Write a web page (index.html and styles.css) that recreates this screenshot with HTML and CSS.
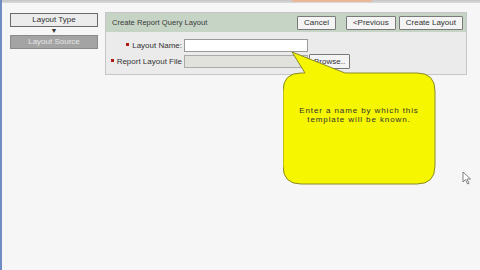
FILE: index.html
```html
<!DOCTYPE html>
<html lang="en">
<head>
  <meta charset="UTF-8">
  <title>Create Report Query Layout</title>
  <link rel="stylesheet" href="styles.css">
</head>
<body>
  <div class="topo"><span class="topo-link"></span></div>

  <div class="pagina">
    <!-- passos -->
    <div class="passos">
      <div class="passo">Layout Type</div>
      <div class="seta">&#9660;</div>
      <div class="passo atual">Layout Source</div>
    </div>

    <!-- painel -->
    <div class="painel">
      <div class="cabecalho">
        <span class="titulo">Create Report Query Layout</span>
        <div class="acoes">
          <button class="btn">Cancel</button>
          <button class="btn btn-prev">&lt;Previous</button>
          <button class="btn">Create Layout</button>
        </div>
      </div>
      <div class="corpo">
        <div class="linha">
          <label class="rotulo"><span class="req"></span>Layout Name:</label>
          <input class="campo" type="text">
        </div>
        <div class="linha">
          <label class="rotulo"><span class="req"></span>Report Layout File</label>
          <input class="campo campo-arq" type="text" disabled>
          <button class="btn btn-arq">Browse..</button>
        </div>
      </div>
    </div>
  </div>

  <!-- balao de ajuda -->
  <div class="balao">
    <svg width="160" height="140" viewBox="0 0 160 140">
      <path d="M22 25 L9 4 L62 25 L134 25 Q152 25 152 43 L152 118 Q152 136 134 136 L18 136 Q0 136 0 118 L0 43 Q0 25 18 25 Z" fill="#f6f600" stroke="#8a8a2a" stroke-width="1"/>
    </svg>
    <div class="balao-texto">Enter a name by which this<br>template will be known.</div>
  </div>

  <svg class="cursor" width="10" height="14" viewBox="0 0 10 14">
    <path d="M1 1 L1 11 L3.5 8.5 L5.5 13 L7 12.3 L5 8 L8.5 8 Z" fill="#fff" stroke="#666" stroke-width="0.8"/>
  </svg>
</body>
</html>
```

FILE: styles.css
```css
body {
  margin: 0;
  font-family: 'Liberation Sans', Arial, sans-serif;
  font-size: 8px;
  color: #333;
  background-color: #f6f6f6;
  border-left: 2px solid #6f8cc4;
  height: 270px;
  box-sizing: border-box;
  overflow: hidden;
}

.topo {
  height: 3px;
  background: linear-gradient(#c4c4c4, #dcdcdc);
  position: relative;
}

.topo-link {
  display: block;
  margin-left: 290px;
  width: 80px;
  height: 2px;
  background: #e8b898;
}

.pagina {
  display: flex;
  align-items: flex-start;
  padding: 9px 0 0 8px;
  gap: 7px;
}

.passos {
  width: 88px;
  display: flex;
  flex-direction: column;
  align-items: stretch;
  padding-top: 1px;
}

.passo {
  height: 12px;
  line-height: 12px;
  text-align: center;
  border: 1px solid #6a6a6a;
  background: #ececec;
  color: #333;
}

.passo.atual {
  background: #a4a4a4;
  border-color: #8a8a8a;
  color: #e6e6e6;
}

.seta {
  height: 8px;
  line-height: 8px;
  text-align: center;
  font-size: 7px;
  color: #333;
}

.painel {
  width: 360px;
  border: 1px solid #c6c6c6;
  background: #ebebeb;
}

.cabecalho {
  display: flex;
  align-items: center;
  justify-content: space-between;
  height: 19px;
  background: #c6d4c6;
  padding: 0 3px 0 6px;
}

.titulo {
  color: #3a3a3a;
  font-size: 7.6px;
}

.acoes {
  display: flex;
  gap: 3px;
}

.btn {
  font-family: inherit;
  font-size: 8px;
  height: 14px;
  padding: 0 6px;
  border: 1px solid #7a7a7a;
  background: #f4f4f4;
  color: #333;
  border-radius: 1px;
}

.btn-prev {
  margin-left: 7px;
}

.corpo {
  padding: 6px 0 6px 0;
  display: flex;
  flex-direction: column;
  gap: 2px;
}

.linha {
  display: flex;
  align-items: center;
  height: 14px;
}

.rotulo {
  width: 76px;
  text-align: right;
  padding-right: 2px;
  color: #333;
  white-space: nowrap;
}

.req {
  display: inline-block;
  width: 3px;
  height: 3px;
  background: #b01818;
  margin-right: 3px;
  vertical-align: 2px;
}

.campo {
  width: 124px;
  height: 13px;
  box-sizing: border-box;
  border: 1px solid #9a9a9a;
  background: #fff;
  margin: 0;
}

.campo-arq {
  background: #e2e2dc;
  border-color: #aaa;
}

.btn-arq {
  height: 15px;
  margin-left: 1px;
  padding: 0 4px;
}

.balao {
  position: absolute;
  left: 283px;
  top: 48px;
  width: 160px;
  height: 140px;
}

.balao svg {
  position: absolute;
  left: 0;
  top: 0;
}

.balao-texto {
  position: absolute;
  left: 0;
  top: 58px;
  width: 152px;
  text-align: center;
  font-size: 8px;
  letter-spacing: 0.9px;
  line-height: 9px;
  color: #333;
}

.cursor {
  position: absolute;
  left: 462px;
  top: 171px;
}
```
